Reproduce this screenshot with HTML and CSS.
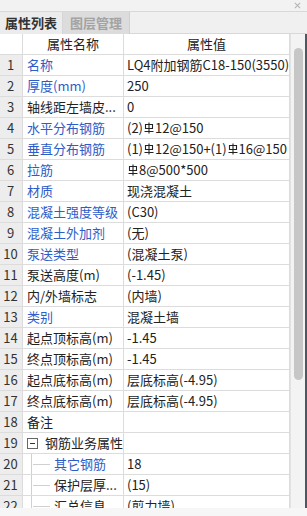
FILE: index.html
```html
<!DOCTYPE html>
<html lang="zh">
<head>
<meta charset="utf-8">
<link rel="stylesheet" href="styles.css">
</head>
<body>
<div class="panel">
  <div class="titlebar"><svg class="close" viewBox="0 0 8 8"><path d="M1 1L7 7M7 1L1 7"/></svg></div>
  <div class="tabs">
    <div class="tab active">属性列表</div>
    <div class="tab">图层管理</div>
  </div>
  <div class="content">
    <div class="grid">
      <div class="row head"><div class="num"></div><div class="name">属性名称</div><div class="val">属性值</div></div>
      <div class="row"><div class="num">1</div><div class="name blue">名称</div><div class="val">LQ4附加钢筋C18-150(3550)</div></div>
      <div class="row"><div class="num">2</div><div class="name blue">厚度(mm)</div><div class="val">250</div></div>
      <div class="row"><div class="num">3</div><div class="name">轴线距左墙皮...</div><div class="val">0</div></div>
      <div class="row"><div class="num">4</div><div class="name blue">水平分布钢筋</div><div class="val">(2)<svg class="rb" viewBox="0 0 10 12"><path d="M1.5 2.5h7v4h-7z M5 0.5v11 M0.5 9.5h9"/></svg>12@150</div></div>
      <div class="row"><div class="num">5</div><div class="name blue">垂直分布钢筋</div><div class="val">(1)<svg class="rb" viewBox="0 0 10 12"><path d="M1.5 2.5h7v4h-7z M5 0.5v11 M0.5 9.5h9"/></svg>12@150+(1)<svg class="rb" viewBox="0 0 10 12"><path d="M1.5 2.5h7v4h-7z M5 0.5v11 M0.5 9.5h9"/></svg>16@150</div></div>
      <div class="row"><div class="num">6</div><div class="name blue">拉筋</div><div class="val"><svg class="rb" viewBox="0 0 10 12"><path d="M1.5 2.5h7v4h-7z M5 0.5v11 M0.5 9.5h9"/></svg>8@500*500</div></div>
      <div class="row"><div class="num">7</div><div class="name blue">材质</div><div class="val">现浇混凝土</div></div>
      <div class="row"><div class="num">8</div><div class="name blue">混凝土强度等级</div><div class="val">(C30)</div></div>
      <div class="row"><div class="num">9</div><div class="name blue">混凝土外加剂</div><div class="val">(无)</div></div>
      <div class="row"><div class="num">10</div><div class="name blue">泵送类型</div><div class="val">(混凝土泵)</div></div>
      <div class="row"><div class="num">11</div><div class="name">泵送高度(m)</div><div class="val">(-1.45)</div></div>
      <div class="row"><div class="num">12</div><div class="name">内/外墙标志</div><div class="val">(内墙)</div></div>
      <div class="row"><div class="num">13</div><div class="name blue">类别</div><div class="val">混凝土墙</div></div>
      <div class="row"><div class="num">14</div><div class="name">起点顶标高(m)</div><div class="val">-1.45</div></div>
      <div class="row"><div class="num">15</div><div class="name">终点顶标高(m)</div><div class="val">-1.45</div></div>
      <div class="row"><div class="num">16</div><div class="name">起点底标高(m)</div><div class="val">层底标高(-4.95)</div></div>
      <div class="row"><div class="num">17</div><div class="name">终点底标高(m)</div><div class="val">层底标高(-4.95)</div></div>
      <div class="row"><div class="num">18</div><div class="name">备注</div><div class="val"></div></div>
      <div class="row"><div class="num">19</div><div class="name group"><span class="minus"></span>钢筋业务属性</div><div class="val"></div></div>
      <div class="row"><div class="num">20</div><div class="name child blue">其它钢筋</div><div class="val">18</div></div>
      <div class="row"><div class="num">21</div><div class="name child">保护层厚...</div><div class="val">(15)</div></div>
      <div class="row"><div class="num">22</div><div class="name child">汇总信息</div><div class="val">(剪力墙)</div></div>
    </div>
    <div class="scroll"><div class="thumb"></div></div>
  </div>
  <div class="footer"></div>
</div>
</body>
</html>
```
FILE: styles.css
```css
* { box-sizing: border-box; }
html, body { margin: 0; padding: 0; }
body {
  width: 307px;
  height: 516px;
  overflow: hidden;
  background: #f5f5f5;
  font-family: "Noto Sans CJK SC", "Microsoft YaHei", sans-serif;
  font-size: 13px;
  color: #222;
}
.panel { width: 307px; height: 516px; display: flex; flex-direction: column; }
.titlebar {
  height: 12px;
  background: #f2f2f2;
  border-bottom: 1px solid #d8d8d8;
  display: flex;
  justify-content: flex-end;
  align-items: center;
  padding-right: 6px;
}
.close {
  width: 7px;
  height: 7px;
  stroke: #b4b4b4;
  stroke-width: 1.2;
  fill: none;
}
.tabs {
  height: 22px;
  display: flex;
  background: #f0f0f0;
  border-bottom: 1px solid #d8d8d8;
}
.tab {
  height: 22px;
  width: 67px;
  text-align: center;
  line-height: 21px;
  font-size: 13px;
  font-weight: bold;
  color: #a3a3a3;
  background: #dcdcdc;
  border-right: 1px solid #cfcfcf;
}
.tab.active {
  color: #333;
  background: #ececec;
  width: 63px;
  border-right: 1px solid #d6d6d6;
}
.content {
  display: flex;
  height: 474px;
  overflow: hidden;
  background: #fff;
}
.grid { width: 290px; }
.row {
  display: grid;
  grid-template-columns: 23px 101px 166px;
  height: 21px;
}
.row > div {
  border-right: 1px solid #dcdcdc;
  border-bottom: 1px solid #dcdcdc;
  line-height: 20px;
  white-space: nowrap;
  overflow: hidden;
}
.num {
  background: #ededed;
  text-align: center;
  color: #333;
  padding-right: 1px;
}
.name { padding-left: 4px; color: #222; }
.val { padding-left: 3px; background: #fff; }
.head > div { background: #fff; text-align: center; padding: 0; }
.head .num { background: #fff; }
.blue { color: #2e5cc8; }
.group { display: flex; align-items: center; padding-left: 4px; }
.minus {
  width: 11px;
  height: 11px;
  border: 1px solid #666;
  margin-right: 7px;
  position: relative;
  flex: none;
}
.minus::after {
  content: "";
  position: absolute;
  left: 2px;
  right: 2px;
  top: 4px;
  height: 1px;
  background: #333;
}
.child { position: relative; padding-left: 31px; }
.child::before {
  content: "";
  position: absolute;
  left: 8px;
  top: 0;
  bottom: 0;
  border-left: 1px solid #d0d0d0;
}
.child::after {
  content: "";
  position: absolute;
  left: 10px;
  width: 17px;
  top: 10px;
  border-top: 1px solid #d0d0d0;
}
.rb {
  width: 10px;
  height: 12px;
  margin: 0 1px;
  vertical-align: -1px;
  fill: none;
  stroke: #222;
  stroke-width: 1.1;
}
.scroll {
  width: 17px;
  background: #f3f3f3;
  border-left: 1px solid #e2e2e2;
  position: relative;
  border-right: 2px solid #4b5866;
}
.thumb {
  position: absolute;
  left: 3px;
  top: 14px;
  width: 9px;
  height: 332px;
  border-radius: 5px;
  background: #c6c6c6;
}
.footer { flex: 1; background: #f6f6f6; }
```
